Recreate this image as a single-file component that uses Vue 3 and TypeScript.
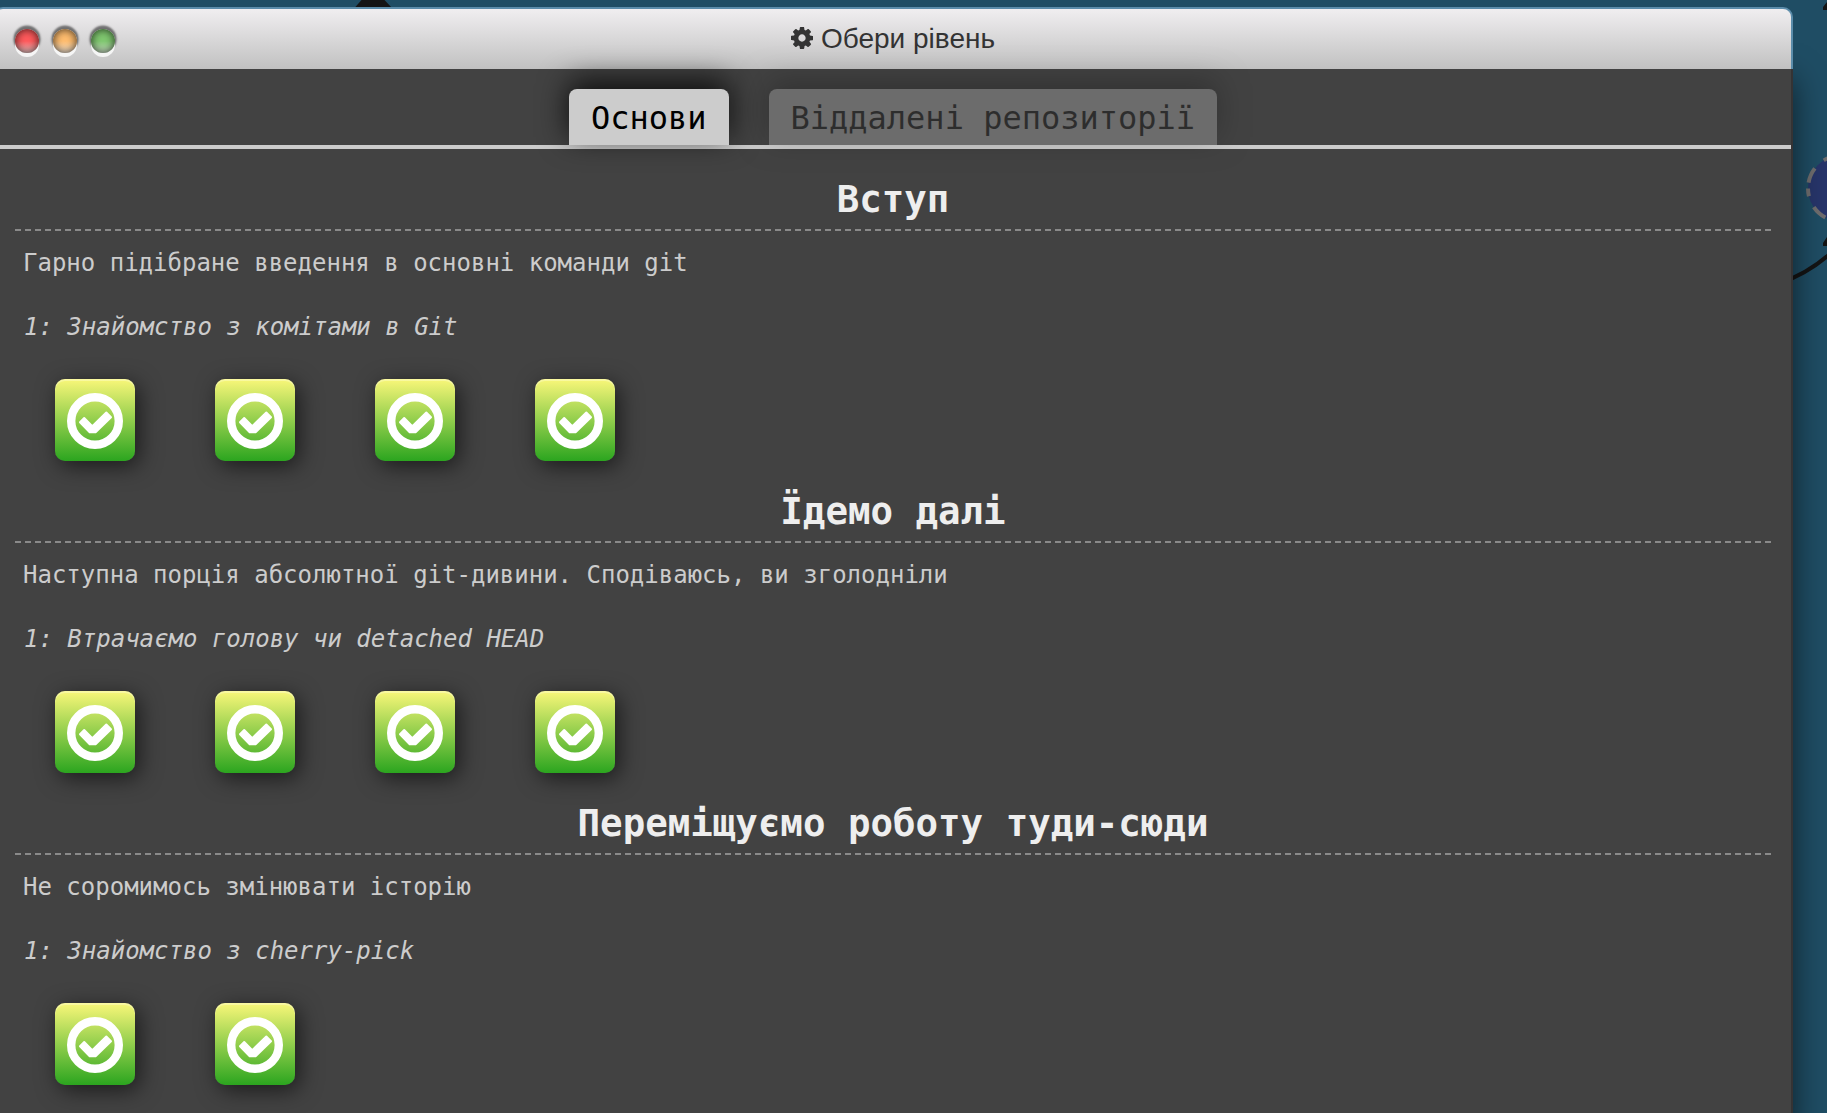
<script setup lang="ts">
interface Sequence {
  title: string
  about: string
  level: string
  count: number
}

const tabs: { label: string; active: boolean }[] = [
  { label: 'Основи', active: true },
  { label: 'Віддалені репозиторії', active: false },
]

const sequences: Sequence[] = [
  { title: 'Вступ', about: 'Гарно підібране введення в основні команди git', level: '1: Знайомство з комітами в Git', count: 4 },
  { title: 'Їдемо далі', about: 'Наступна порція абсолютної git-дивини. Сподіваюсь, ви зголодніли', level: '1: Втрачаємо голову чи detached HEAD', count: 4 },
  { title: 'Переміщуємо роботу туди-сюди', about: 'Не соромимось змінювати історію', level: '1: Знайомство з cherry-pick', count: 2 },
]
</script>

<template>
  <div class="desktop">
    <svg class="tree" width="1827" height="1113" viewBox="0 0 1827 1113">
      <path d="M361.500 0H384.500L392 8H354.500Z" fill="#141414" />
      <path d="M1780 283Q1812 272 1836 248" fill="none" stroke="#141414" stroke-width="4" />
      <path d="M1827 2L1823 7V10H1827ZM1827 237L1823 243V246H1827Z" fill="#141414" />
      <circle cx="1841" cy="188.500" r="33" fill="#27356a" />
      <circle cx="1841" cy="188.500" r="33" fill="none" stroke="#6f6d6e" stroke-width="4" stroke-dasharray="15.600 12" stroke-dashoffset="-6" transform="rotate(180 1841 188.500)" />
    </svg>
    <div class="window">
      <header class="toolbar">
        <div class="lights">
          <span class="light red"></span>
          <span class="light amber"></span>
          <span class="light green"></span>
        </div>
        <div class="caption">
          <svg class="cog" width="22" height="22" viewBox="0 0 1536 1536">
            <path fill="#333" d="M1024 768q0-106-75-181t-181-75-181 75-75 181 75 181 181 75 181-75 75-181zm512-109v222q0 12-8 23t-20 13l-185 28q-19 54-39 91 35 50 107 138 10 12 10 25t-9 23q-27 37-99 108t-94 71q-12 0-26-9l-138-108q-44 23-91 38-16 136-29 186-7 28-36 28H657q-14 0-24.500-8.500T621 1506l-28-184q-49-16-90-37l-141 107q-10 9-25 9-14 0-25-11-126-114-165-168-7-10-7-23 0-12 8-23 15-21 51-66.500t54-70.500q-27-50-41-99L29 913q-13-2-21-12.500T0 877V655q0-12 8-23t19-13l186-28q14-46 39-92-40-57-107-138-10-12-10-24 0-10 9-23 26-36 98.500-107.500T337 135q13 0 26 10l138 107q44-23 91-38 16-136 29-186 7-28 36-28h222q14 0 24.500 8.500T915 30l28 184q49 16 90 37l142-107q9-9 24-9 13 0 25 10 129 119 165 170 7 8 7 22 0 12-8 23-15 21-51 66.500t-54 70.500q26 50 41 98l183 28q13 2 21 12.500t8 23.500z" />
          </svg>
          <span>Обери рівень</span>
        </div>
      </header>
      <main class="inside">
        <nav class="tabs">
          <div v-for="tab in tabs" :key="tab.label" class="tab" :class="{ active: tab.active }">{{ tab.label }}</div>
        </nav>
        <div class="rule"></div>
        <section v-for="s in sequences" :key="s.title" class="sequence">
          <h2>{{ s.title }}</h2>
          <svg class="dash" width="1756" height="2"><line x1="0" y1="1" x2="1756" y2="1" stroke="#8a8a8a" stroke-width="2" stroke-dasharray="6 4" /></svg>
          <p class="about">{{ s.about }}</p>
          <p class="level">{{ s.level }}</p>
          <div class="icons">
            <div v-for="n in s.count" :key="n" class="icon">
              <svg width="80" height="82" viewBox="0 0 80 82">
                <circle cx="40" cy="42" r="23.800" fill="none" stroke="#fff" stroke-width="8.400" />
                <path d="M25 43.200L29.200 39L37.300 47.100L51.300 33.500L56 38.300L40.600 53.200H34.700Z" fill="#fff" stroke="#fff" stroke-width="2" stroke-linejoin="round" />
              </svg>
            </div>
          </div>
        </section>
      </main>
    </div>
  </div>
</template>

<style>
html,
body {
  margin: 0;
  overflow: hidden;
}
</style>

<style scoped>
.desktop {
  display: flow-root;
  position: relative;
  width: 1827px;
  height: 1113px;
  overflow: hidden;
  background: #1f4d64;
}
.tree {
  position: absolute;
  inset: 0;
}
.window {
  position: relative;
  z-index: 0;
  width: 1800px;
  margin: 7px 0 0 -7px;
}
.toolbar {
  box-sizing: border-box;
  position: relative;
  z-index: 1;
  height: 62px;
  border: 2px solid #5b8caa;
  border-bottom: 0;
  border-radius: 10px 10px 0 0;
  background: linear-gradient(#f0eef0, #c1c1c1);
  display: flex;
  align-items: center;
  justify-content: center;
}
.lights {
  position: absolute;
  left: 20px;
  top: 20px;
  display: flex;
  gap: 14px;
}
.light {
  width: 24px;
  height: 24px;
  border-radius: 50%;
  box-shadow: 0 4px 0 #f5f5f5, 0 -2px 2px 1.5px rgba(0, 0, 0, 0.5), inset 0 0 8px rgba(0, 0, 0, 0.75);
}
.red {
  background: linear-gradient(#ff5a5c 50%, #ecc4c4);
}
.amber {
  background: linear-gradient(#ffbd6f 50%, #f5e4d0);
}
.green {
  background: linear-gradient(#80c870 50%, #cbe0c5);
}
.caption {
  display: flex;
  align-items: center;
  gap: 8px;
  color: #333;
  font: 28px/40px "Liberation Sans", Arial, sans-serif;
}
.cog {
  margin-top: -3px;
}
.inside {
  box-sizing: border-box;
  height: 1060px;
  border: 0 solid #353334;
  border-width: 0 2px;
  background: #424242;
  box-shadow: 0 10px 30px rgba(0, 0, 0, 0.6);
  color: #ccc;
  font: 24px/32px "DejaVu Sans Mono", monospace;
}
.tabs {
  position: relative;
  z-index: 2;
  display: flex;
  justify-content: center;
  gap: 40px;
  padding-top: 20px;
}
.tab {
  box-sizing: border-box;
  height: 56px;
  padding: 0 22px;
  border-radius: 8px 8px 0 0;
  background: #ccc;
  color: #000;
  font-size: 32px;
  line-height: 58px;
  opacity: 0.3;
  box-shadow: 0 -8px 30px rgba(0, 0, 0, 0.8);
}
.tab.active {
  opacity: 1;
}
.rule {
  height: 4px;
  background: #ccc;
}
.sequence {
  height: 312px;
  padding: 0 20px;
}
h2 {
  box-sizing: border-box;
  height: 80px;
  margin: 0;
  padding-top: 28px;
  text-align: center;
  color: #eee;
  font-size: 37.44px;
  line-height: 44px;
}
.dash {
  display: block;
}
p {
  margin: 0 0 0 8px;
}
.about {
  padding-top: 16px;
}
.level {
  margin-left: 9px;
  padding-top: 32px;
  font-style: italic;
}
.icons {
  display: flex;
  gap: 80px;
  padding: 36px 0 0 40px;
}
.icon {
  width: 80px;
  height: 82px;
  border-radius: 10px;
  background: linear-gradient(#f9f779, #2ba51f);
  box-shadow: 4px 5px 22px rgba(0, 0, 0, 0.6), inset 0 2px 0 rgba(255, 255, 255, 0.3);
}
.icon svg {
  display: block;
}
</style>
